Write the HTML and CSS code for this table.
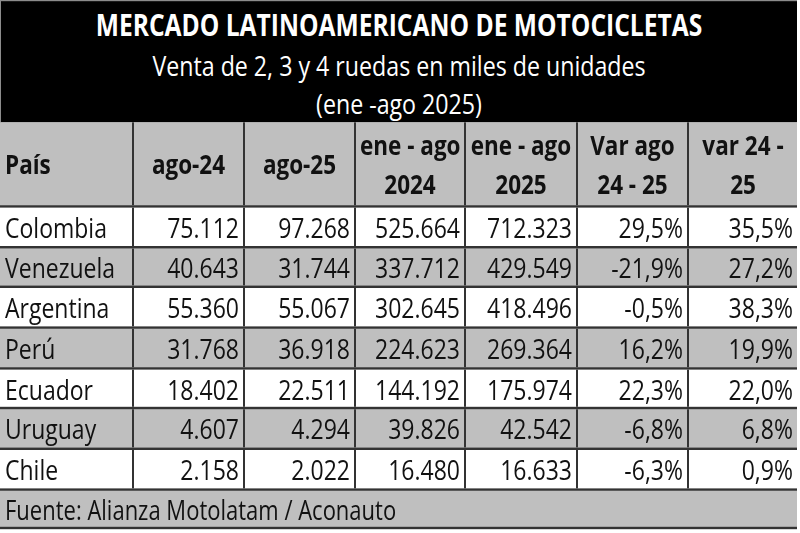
FILE: index.html
```html
<!DOCTYPE html>
<html lang="es">
<head>
<meta charset="utf-8">
<title>Mercado latinoamericano de motocicletas</title>
<link rel="stylesheet" href="styles.css">
</head>
<body>
<div class="page">
<div class="sheet">
  <header class="banner">
    <h1 class="title">MERCADO LATINOAMERICANO DE MOTOCICLETAS</h1>
    <p class="sub">Venta de 2, 3 y 4 ruedas en miles de unidades<br>(ene -ago 2025)</p>
  </header>
  <table class="data">
    <colgroup>
      <col class="c-country">
      <col class="c-a">
      <col class="c-b">
      <col class="c-c">
      <col class="c-d">
      <col class="c-e">
      <col class="c-f">
    </colgroup>
    <thead>
      <tr>
        <th class="country">País</th>
        <th>ago-24</th>
        <th>ago-25</th>
        <th>ene - ago<br>2024</th>
        <th>ene - ago<br>2025</th>
        <th>Var ago<br>24 - 25</th>
        <th>var 24 -<br>25</th>
      </tr>
    </thead>
    <tbody>
      <tr><td class="country">Colombia</td><td>75.112</td><td>97.268</td><td>525.664</td><td>712.323</td><td>29,5%</td><td>35,5%</td></tr>
      <tr class="alt"><td class="country">Venezuela</td><td>40.643</td><td>31.744</td><td>337.712</td><td>429.549</td><td>-21,9%</td><td>27,2%</td></tr>
      <tr><td class="country">Argentina</td><td>55.360</td><td>55.067</td><td>302.645</td><td>418.496</td><td>-0,5%</td><td>38,3%</td></tr>
      <tr class="alt"><td class="country">Perú</td><td>31.768</td><td>36.918</td><td>224.623</td><td>269.364</td><td>16,2%</td><td>19,9%</td></tr>
      <tr><td class="country">Ecuador</td><td>18.402</td><td>22.511</td><td>144.192</td><td>175.974</td><td>22,3%</td><td>22,0%</td></tr>
      <tr class="alt"><td class="country">Uruguay</td><td>4.607</td><td>4.294</td><td>39.826</td><td>42.542</td><td>-6,8%</td><td>6,8%</td></tr>
      <tr><td class="country">Chile</td><td>2.158</td><td>2.022</td><td>16.480</td><td>16.633</td><td>-6,3%</td><td>0,9%</td></tr>
    </tbody>
    <tfoot>
      <tr><td class="source" colspan="7">Fuente: Alianza Motolatam / Aconauto</td></tr>
    </tfoot>
  </table>
</div>
</div>
</body>
</html>
```
FILE: styles.css
```css
html, body {
  margin: 0;
  padding: 0;
  background: #ffffff;
}

.page {
  width: 800px;
  height: 533px;
  overflow: hidden;
}

.sheet {
  width: 797px;
  font-family: "Open Sans", "Liberation Sans", sans-serif;
  color: #111111;
  transform: scaleY(1.2);
  transform-origin: 0 0;
}

.banner {
  box-sizing: border-box;
  height: 102px;
  padding-top: 1.5px;
  background: #000000;
  color: #ffffff;
  text-align: center;
  border-top: 1px solid #8c8c8c;
  border-left: 1px solid #8c8c8c;
}

.title {
  margin: 0;
  font-size: 24.6px;
  font-weight: 700;
  line-height: 35px;
  letter-spacing: 0;
}

.sub {
  margin: 0;
  font-size: 23.2px;
  font-weight: 400;
  line-height: 32.5px;
}

.data {
  width: 797px;
  border-collapse: collapse;
  table-layout: fixed;
}

.c-country { width: 133px; }
.c-a { width: 111px; }
.c-b { width: 111px; }
.c-c { width: 110px; }
.c-d { width: 112px; }
.c-e { width: 111px; }
.c-f { width: 109px; }

.data th,
.data td {
  border-left: 2px solid #333333;
  border-bottom: 2px solid #333333;
  padding: 0 4px;
  white-space: nowrap;
  overflow: hidden;
}

.data th:first-child,
.data td:first-child {
  border-left: none;
}

.data th {
  height: 69px;
  background: #bfbfbf;
  font-size: 22.5px;
  font-weight: 700;
  line-height: 33px;
  text-align: center;
  vertical-align: middle;
}

.data td {
  height: 31.7px;
  font-size: 23px;
  line-height: 30px;
  text-align: right;
  vertical-align: middle;
  background: #ffffff;
}

.data tr.alt td {
  background: #bfbfbf;
}

.data th.country,
.data td.country {
  text-align: left;
  padding-left: 5px;
}

.data td.source {
  height: 29.5px;
  background: #bfbfbf;
  font-size: 22px;
  text-align: left;
  padding-left: 5px;
  border-left: none;
}
```
